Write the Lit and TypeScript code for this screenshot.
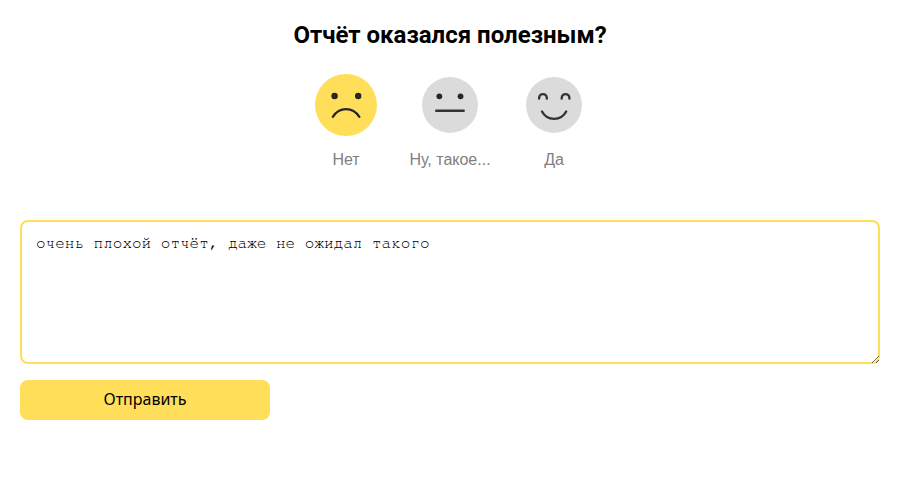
import { LitElement, html, css, svg } from "lit";
import { customElement, state } from "lit/decorators.js";

const ratings = [
  {
    value: "no",
    label: "Нет",
    face: svg`
      <circle class="dot" cx="19.6" cy="22" r="3.2"/>
      <circle class="dot" cx="43.2" cy="22" r="3.2"/>
      <path class="line" d="M17.8 42.8 C24.5 32.6 37.5 32.6 44.4 42.8"/>`,
  },
  {
    value: "maybe",
    label: "Ну, такое...",
    face: svg`
      <circle class="dot" cx="19.2" cy="21.4" r="3.2"/>
      <circle class="dot" cx="42.7" cy="21.4" r="3.2"/>
      <path class="line" d="M15.7 37.4 H46.2"/>`,
  },
  {
    value: "yes",
    label: "Да",
    face: svg`
      <path class="line" d="M14.5 23.8 C14.5 17.3 23.1 17.3 23.1 23.8"/>
      <path class="line" d="M39.5 23.8 C39.5 17.3 48.1 17.3 48.1 23.8"/>
      <path class="line" d="M17.7 38.2 C23.3 49 38.9 49 44.5 38.2"/>`,
  },
];

@customElement("app-root")
export class AppRoot extends LitElement {
  @state() private rating = "no";

  static styles = css`
    :host {
      display: block;
      color: #000;
      background: #fff;
    }
    form {
      padding: 20px;
    }
    h1 {
      margin: 0;
      font: 700 24px/30px Roboto, "Noto Sans", sans-serif;
      text-align: center;
    }
    .ratings {
      display: flex;
      justify-content: center;
      margin: 20px 0 0;
      padding: 0;
      border: 0;
    }
    .rating {
      display: flex;
      flex-direction: column;
      align-items: center;
      gap: 8px;
      width: 104px;
      font: 16px/24px "Liberation Sans", Arial, sans-serif;
      color: #808080;
      cursor: pointer;
      position: relative;
    }
    .rating input {
      position: absolute;
      opacity: 0;
      margin: 0;
    }
    .slot {
      display: flex;
      align-items: center;
      justify-content: center;
      height: 70px;
    }
    .face {
      width: 56px;
      height: 56px;
    }
    .disc {
      fill: #dbdbdb;
    }
    .dot {
      fill: #262626;
    }
    .line {
      fill: none;
      stroke: #333;
      stroke-width: 2.6;
      stroke-linecap: round;
    }
    input:checked + .slot .face {
      width: 62px;
      height: 62px;
    }
    input:checked + .slot .disc {
      fill: #ffde5a;
    }
    input:checked + .slot .line {
      stroke: #262626;
      stroke-width: 2.2;
    }
    textarea {
      display: block;
      box-sizing: border-box;
      width: 100%;
      height: 144px;
      margin: 48px 0 16px;
      padding: 14px 16px;
      border: 0;
      border-radius: 8px;
      box-shadow: inset 0 0 0 2px #ffde5a;
      outline: none;
      background: #fff;
      color: #000;
      font: 16px/18px FreeMono, "Liberation Mono", "Courier New", monospace;
    }
    button {
      width: 250px;
      height: 40px;
      padding: 0 0 2px;
      border: 0;
      border-radius: 8px;
      background: #ffde5a;
      color: #000;
      font: 16px/24px "Noto Sans", sans-serif;
      cursor: pointer;
    }
  `;

  render() {
    return html`
      <form @submit=${(e: Event) => e.preventDefault()}>
        <h1 id="title">Отчёт оказался полезным?</h1>
        <fieldset class="ratings" aria-labelledby="title">
          ${ratings.map(
            (r) => html`
              <label class="rating">
                <input
                  type="radio"
                  name="rating"
                  .value=${r.value}
                  .checked=${this.rating === r.value}
                  @change=${() => (this.rating = r.value)}
                />
                <span class="slot">
                  <svg class="face" viewBox="0 0 62 62" aria-hidden="true">
                    <circle class="disc" cx="31" cy="31" r="31" />
                    ${r.face}
                  </svg>
                </span>
                <span>${r.label}</span>
              </label>
            `
          )}
        </fieldset>
        <textarea aria-label="Комментарий" spellcheck="false" .value=${"очень плохой отчёт, даже не ожидал такого"}></textarea>
        <button type="submit">Отправить</button>
      </form>
    `;
  }
}
